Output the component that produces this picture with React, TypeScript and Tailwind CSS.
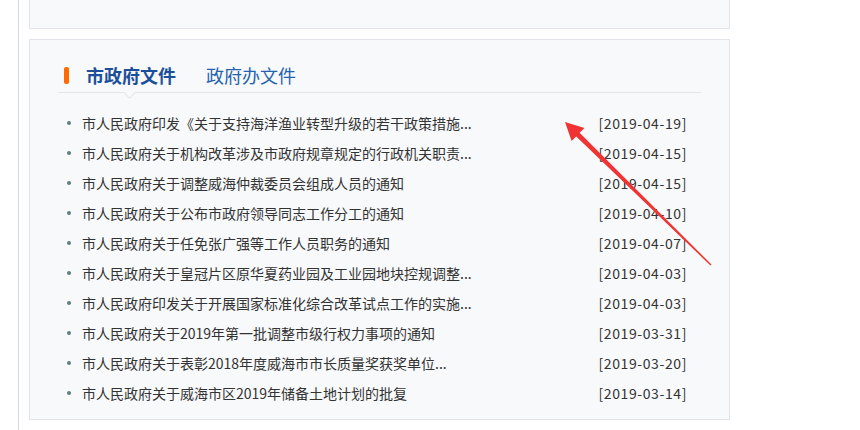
import React from "react";

const items: { t: string; d: string }[] = [
  { t: "市人民政府印发《关于支持海洋渔业转型升级的若干政策措施...", d: "[2019-04-19]" },
  { t: "市人民政府关于机构改革涉及市政府规章规定的行政机关职责...", d: "[2019-04-15]" },
  { t: "市人民政府关于调整威海仲裁委员会组成人员的通知", d: "[2019-04-15]" },
  { t: "市人民政府关于公布市政府领导同志工作分工的通知", d: "[2019-04-10]" },
  { t: "市人民政府关于任免张广强等工作人员职务的通知", d: "[2019-04-07]" },
  { t: "市人民政府关于皇冠片区原华夏药业园及工业园地块控规调整...", d: "[2019-04-03]" },
  { t: "市人民政府印发关于开展国家标准化综合改革试点工作的实施...", d: "[2019-04-03]" },
  { t: "市人民政府关于2019年第一批调整市级行权力事项的通知", d: "[2019-03-31]" },
  { t: "市人民政府关于表彰2018年度威海市市长质量奖获奖单位...", d: "[2019-03-20]" },
  { t: "市人民政府关于威海市区2019年储备土地计划的批复", d: "[2019-03-14]" },
];

export default function App() {
  return (
    <div className="relative w-[860px] h-[430px] overflow-hidden bg-white font-['Noto_Sans_CJK_SC',sans-serif]">
      <div className="ml-[18px] h-full border-l border-[#d5d8dc] pl-[10px]">
        <div className="w-[701px] h-[29px] border border-t-0 border-[#e1e4e8] bg-[#f8f9fb]" />
        <div className="mt-[10px] w-[701px] h-[381px] border border-[#e1e4e8] bg-[#f8f9fb] px-[28px]">
          <div className="relative mt-[18px] h-[35px] border-b border-[#e2e5e9] flex items-center pl-[6px]">
            <div className="w-[5px] h-[17px] rounded-[2px] bg-[#ff6a00]" />
            <div className="ml-[17px] text-[18px] font-bold text-[#1c4f9a] leading-none">市政府文件</div>
            <div className="ml-[30px] text-[18px] text-[#2563ae] leading-none">政府办文件</div>
            <div className="absolute left-[67px] bottom-[-5px] w-[9px] h-[9px] rotate-45 border-r border-b border-[#e2e5e9] bg-[#f8f9fb]" />
          </div>
          <ul className="mt-[15px]">
            {items.map((it, i) => (
              <li key={i} className="h-[30px] flex items-center justify-between pl-[9px] pr-[14px] text-[14px] text-[#333333]">
                <div className="flex items-center">
                  <span className="w-[4px] h-[4px] rounded-full bg-[#5f7f84]" />
                  <span className="ml-[11px] whitespace-nowrap">{it.t}</span>
                </div>
                <span className="tracking-[0.6px] whitespace-nowrap">{it.d}</span>
              </li>
            ))}
          </ul>
        </div>
      </div>
      <svg className="absolute left-0 top-0 pointer-events-none" width="860" height="430" viewBox="0 0 860 430">
        <polygon
          points="565,122 584.5,128 579.6,132.8 711.5,264.5 710.5,265.5 576.2,136.4 571.6,141"
          fill="#f03434"
        />
      </svg>
    </div>
  );
}
